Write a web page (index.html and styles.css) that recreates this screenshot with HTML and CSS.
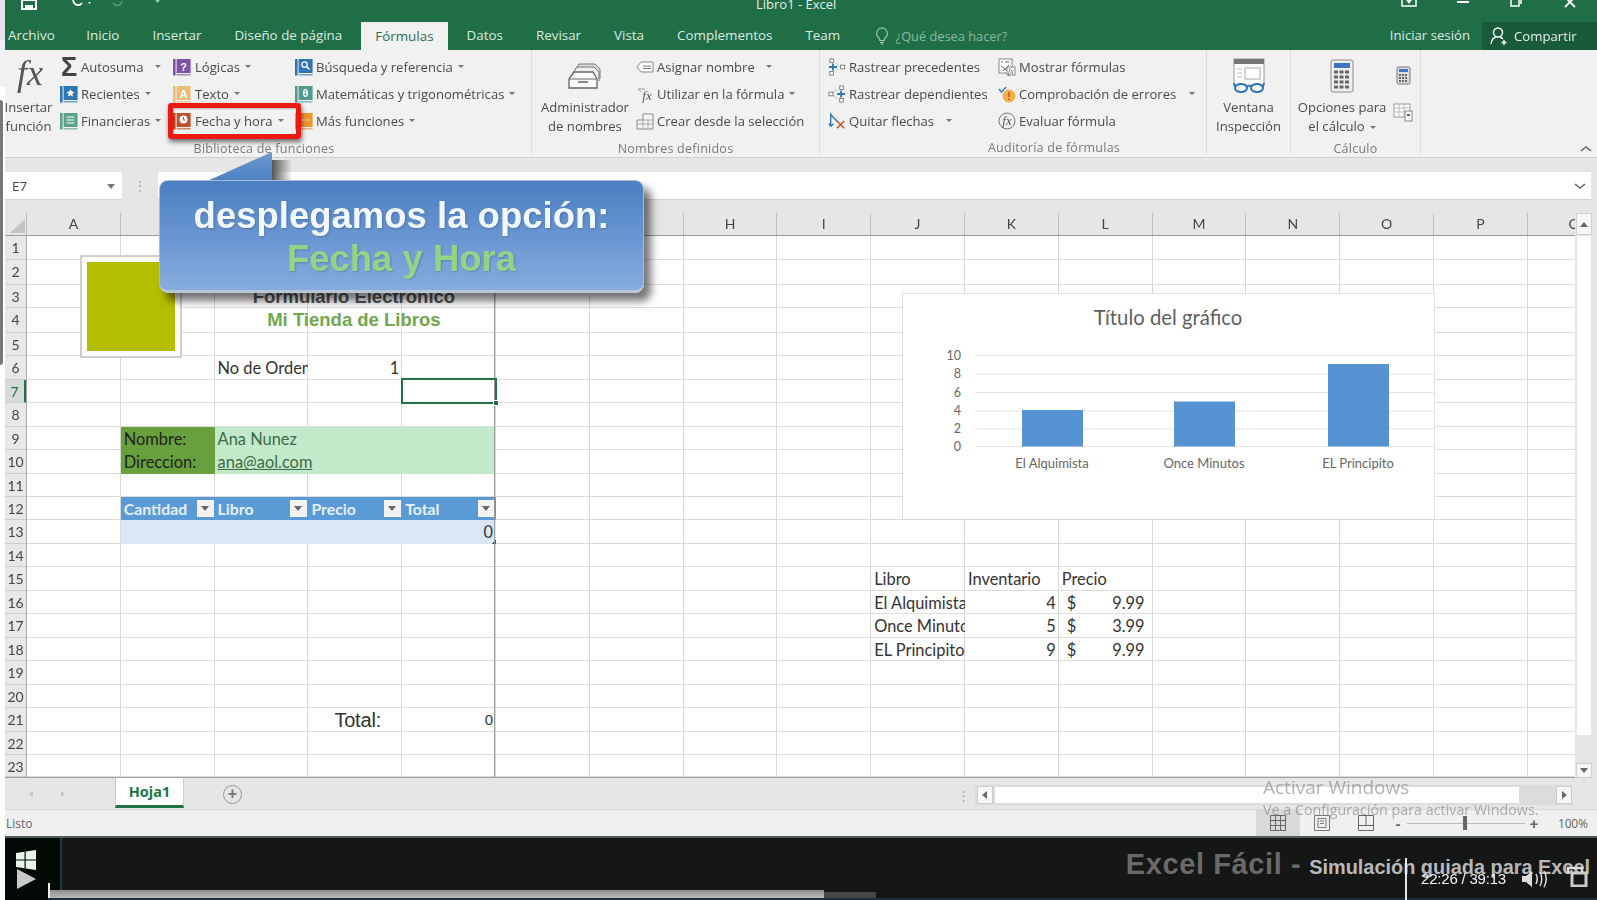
FILE: index.html
```html
<!DOCTYPE html>
<html lang="es">
<head>
<meta charset="utf-8">
<title>Libro1 - Excel</title>
<link rel="stylesheet" href="styles.css">
</head>
<body>
<svg class="sprite" aria-hidden="true">
  <symbol id="book" viewBox="0 0 18 18">
    <rect x="0" y="1" width="2.6" height="16.5" fill="currentColor"/>
    <rect x="3.6" y="1" width="14" height="14" fill="currentColor"/>
    <rect x="3.6" y="16" width="14" height="1.5" fill="currentColor" opacity=".65"/>
  </symbol>
</svg>
<div class="page">
  <div class="edge"><div class="edge-a"></div><div class="edge-b"></div><div class="edge-c"></div><div class="edge-d"></div></div>
  <div class="main">
    <header class="titlebar">
      <div class="qat">
        <svg class="save" width="16" height="10" viewBox="0 0 16 10"><path d="M1 0h14v9H1z" fill="none" stroke="#fff" stroke-width="2"/><rect x="4" y="5" width="8" height="4" fill="#fff"/></svg>
        <svg class="undo" width="22" height="10" viewBox="0 0 22 10"><path d="M2 0c1 5 6 7 9 3" fill="none" stroke="#fff" stroke-width="1.6"/><path d="M17 2l3 0-1.500 2z" fill="#fff"/></svg>
        <svg class="redo" width="50" height="10" viewBox="0 0 50 10"><path d="M2 3c4 4 8 3 9-2" fill="none" stroke="#5d9a7b" stroke-width="1.4"/><path d="M44 0l5 0-2.500 3z" fill="#9cc4ae"/></svg>
      </div>
      <div class="doc-title">Libro1 - Excel</div>
      <div class="winbtns">
        <svg class="wb-ribbon" width="16" height="8" viewBox="0 0 16 8"><path d="M1 0v6h14V0" fill="none" stroke="#fff" stroke-width="1.500"/><path d="M5 0h6L8 4z" fill="#fff"/></svg>
        <svg class="wb-min" width="12" height="6" viewBox="0 0 12 6"><rect y="1" width="12" height="2" fill="#fff"/></svg>
        <svg class="wb-max" width="12" height="8" viewBox="0 0 12 8"><path d="M1 0v6h8V0M4 0v-1M10 3h1V0" fill="none" stroke="#fff" stroke-width="1.500"/></svg>
        <svg class="wb-close" width="12" height="8" viewBox="0 0 12 8"><path d="M1-3l10 10M11-3L1 7" stroke="#fff" stroke-width="1.800"/></svg>
      </div>
    </header>

    <nav class="tabs">
      <span class="tab tab-file">Archivo</span>
      <span class="tab">Inicio</span>
      <span class="tab">Insertar</span>
      <span class="tab">Diseño de página</span>
      <span class="tab tab-on">Fórmulas</span>
      <span class="tab">Datos</span>
      <span class="tab">Revisar</span>
      <span class="tab">Vista</span>
      <span class="tab">Complementos</span>
      <span class="tab">Team</span>
      <span class="tell">
        <svg width="14" height="18" viewBox="0 0 14 18"><path d="M7 1a5.500 5.500 0 0 0-3 10c.6.500.8 1.500.8 2.500h4.400c0-1 .2-2 .8-2.500A5.500 5.500 0 0 0 7 1zM5 15.500h4M5.800 17h2.400" fill="none" stroke="#a8c9b6" stroke-width="1.100"/></svg>
        ¿Qué desea hacer?
      </span>
      <span class="signin">Iniciar sesión</span>
      <span class="share">
        <svg width="18" height="20" viewBox="0 0 18 20"><circle cx="8" cy="6.500" r="4.500" fill="none" stroke="#fff" stroke-width="1.400"/><path d="M1 18c.5-4 3-6.500 5-7M10 11c1 .3 2 1 3 2M14 14v5M11.500 16.500h5" fill="none" stroke="#fff" stroke-width="1.400"/></svg>
        Compartir
      </span>
    </nav>

    <section class="ribbon">
      <div class="group g-lib">
        <div class="group-body">
          <div class="big big-fx">
            <div class="big-icon"><span class="fx">fx</span></div>
            <div class="big-label">Insertar<br>función</div>
          </div>
          <div class="col col-a">
            <div class="cmd"><span class="ico sigma">Σ</span>Autosuma<i class="caret far-a"></i></div>
            <div class="cmd"><svg class="ico blue" viewBox="0 0 18 18"><use href="#book"/><path d="M10.500 4l1.200 2.600 2.800.3-2.100 1.900.6 2.800-2.500-1.400-2.500 1.400.6-2.800-2.100-1.900 2.800-.3z" fill="#fff"/></svg>Recientes<i class="caret"></i></div>
            <div class="cmd"><svg class="ico teal" viewBox="0 0 18 18"><use href="#book"/><path d="M6.500 5h8M6.500 8h8M6.500 11h8" stroke="#fff" stroke-width="1.200"/></svg>Financieras<i class="caret"></i></div>
          </div>
          <div class="col col-b">
            <div class="cmd"><svg class="ico purple" viewBox="0 0 18 18"><use href="#book"/><text x="10.500" y="12.500" class="ico-txt">?</text></svg>Lógicas<i class="caret"></i></div>
            <div class="cmd"><svg class="ico amber" viewBox="0 0 18 18"><use href="#book"/><text x="10.500" y="12.500" class="ico-txt">A</text></svg>Texto<i class="caret"></i></div>
            <div class="cmd"><svg class="ico rust" viewBox="0 0 18 18"><use href="#book"/><circle cx="10.500" cy="7.500" r="4" fill="#fff"/><path d="M10.500 5v3h2" stroke="#c0502a" fill="none"/></svg>Fecha y hora<i class="caret"></i></div>
          </div>
          <div class="col col-c">
            <div class="cmd"><svg class="ico blue" viewBox="0 0 18 18"><use href="#book"/><circle cx="9.500" cy="6.500" r="2.700" fill="none" stroke="#fff" stroke-width="1.300"/><path d="M11.500 8.500l3 3" stroke="#fff" stroke-width="1.500"/></svg>Búsqueda y referencia<i class="caret"></i></div>
            <div class="cmd"><svg class="ico sea" viewBox="0 0 18 18"><use href="#book"/><text x="10.500" y="12" class="ico-txt">θ</text></svg>Matemáticas y trigonométricas<i class="caret"></i></div>
            <div class="cmd"><svg class="ico orange" viewBox="0 0 18 18"><use href="#book"/><path d="M7 8h1.500M10 8h1.500M13 8h1.500" stroke="#fff" stroke-width="1.200"/></svg>Más funciones<i class="caret"></i></div>
          </div>
        </div>
        <div class="group-label label-lib">Biblioteca de funciones</div>
      </div>

      <div class="group g-names">
        <div class="group-body">
          <div class="big big-admin">
            <div class="big-icon">
              <svg width="36" height="30" viewBox="0 0 36 30"><path d="M8 9l4-6h16l5 5v10" fill="#ddd" stroke="#777"/><path d="M6 12l4-6h17l5 5v9" fill="#eee" stroke="#777"/><path d="M2 18l5-7h19l4 7v9H2z" fill="#fafafa" stroke="#666" stroke-width="1.300"/><path d="M2 18h28" stroke="#666"/><rect x="11" y="20" width="10" height="2" fill="#888"/></svg>
            </div>
            <div class="big-label">Administrador<br>de nombres</div>
          </div>
          <div class="col col-d">
            <div class="cmd"><svg class="ico" viewBox="0 0 18 18"><path d="M5 4h12v10H5L1 9z" fill="#fff" stroke="#888"/><path d="M7 8h8M7 10.500h8" stroke="#777"/></svg>Asignar nombre<i class="caret far-b"></i></div>
            <div class="cmd"><svg class="ico" viewBox="0 0 18 18"><path d="M2 4h7M2 4l3 3" stroke="#999" fill="none"/><text x="11" y="15" class="ico-fx">fx</text></svg>Utilizar en la fórmula<i class="caret"></i></div>
            <div class="cmd"><svg class="ico" viewBox="0 0 18 18"><path d="M7 2h10v15H1V8h6z" fill="#f5f5f5" stroke="#888"/><path d="M1 12h16M7 8v9M12 8v9M7 8h10" stroke="#aaa"/></svg>Crear desde la selección</div>
          </div>
        </div>
        <div class="group-label">Nombres definidos</div>
      </div>

      <div class="group g-audit">
        <div class="group-body">
          <div class="col col-e">
            <div class="cmd"><svg class="ico" viewBox="0 0 20 20"><rect x="2" y="1" width="4" height="4" fill="#fff" stroke="#777"/><rect x="2" y="15" width="4" height="4" fill="#fff" stroke="#777"/><rect x="14" y="8" width="4.500" height="4" fill="#fff" stroke="#777"/><path d="M1 10h9M5.500 6v8" stroke="#2e75b6" stroke-width="2"/><path d="M9 6l3 3M9 14l3-3" stroke="#888" stroke-dasharray="1 1"/></svg>Rastrear precedentes</div>
            <div class="cmd"><svg class="ico" viewBox="0 0 20 20"><rect x="1" y="8" width="4.500" height="4" fill="#fff" stroke="#777"/><rect x="13" y="1" width="4" height="4" fill="#fff" stroke="#777"/><rect x="13" y="15" width="4" height="4" fill="#fff" stroke="#777"/><path d="M10 10h9M14.500 6v8" stroke="#2e75b6" stroke-width="2"/><path d="M6 8l4-3M6 12l4 3" stroke="#888" stroke-dasharray="1 1"/></svg>Rastrear dependientes</div>
            <div class="cmd"><svg class="ico" viewBox="0 0 20 20"><path d="M3 1v15M3 16l-2-3M3 16l3-3M3 3l8 8" stroke="#2e75b6" stroke-width="1.500" fill="none"/><path d="M10 10l8 8M18 10l-8 8" stroke="#d9502e" stroke-width="1.800"/></svg>Quitar flechas<i class="caret far-c"></i></div>
          </div>
          <div class="col col-f">
            <div class="cmd"><svg class="ico" viewBox="0 0 18 18"><rect x="1" y="1" width="13" height="14" fill="#fff" stroke="#888"/><path d="M3 4h2M7 4h4M3 8l8 6M11 7l-6 6" stroke="#666"/><rect x="9" y="9" width="8" height="8" fill="#fff" stroke="#888"/><text x="13" y="16" class="ico-mini">fx</text></svg>Mostrar fórmulas</div>
            <div class="cmd"><svg class="ico" viewBox="0 0 18 18"><circle cx="11" cy="11" r="6.500" fill="#f3b04a"/><path d="M11 7v5M11 13.500v1.500" stroke="#d9502e" stroke-width="1.700"/><path d="M1 4l2.500 3L8 2" fill="none" stroke="#3f7fbe" stroke-width="1.500"/></svg>Comprobación de errores<i class="caret far-d"></i></div>
            <div class="cmd"><svg class="ico" viewBox="0 0 18 18"><circle cx="9" cy="9" r="8" fill="none" stroke="#777"/><text x="9" y="13" class="ico-fx">fx</text></svg>Evaluar fórmula</div>
          </div>
        </div>
        <div class="group-label label-audit">Auditoría de fórmulas</div>
      </div>

      <div class="group g-watch">
        <div class="group-body">
          <div class="big big-watch">
            <div class="big-icon">
              <svg width="34" height="36" viewBox="0 0 34 36"><rect x="2" y="1" width="30" height="26" fill="#fbfbfb" stroke="#999"/><rect x="2" y="1" width="30" height="5" fill="#777"/><rect x="13" y="10" width="15" height="11" fill="#fff" stroke="#aaa"/><path d="M5 11h5M5 15h5M5 19h5" stroke="#bbb"/><ellipse cx="9" cy="30" rx="6" ry="4" fill="#fff" stroke="#2e75b6" stroke-width="2"/><ellipse cx="25" cy="30" rx="6" ry="4" fill="#fff" stroke="#2e75b6" stroke-width="2"/><path d="M15 29c1-1.500 3-1.500 4 0M3 29l-1-4M31 29l1-4" stroke="#2e75b6" stroke-width="1.800" fill="none"/></svg>
            </div>
            <div class="big-label">Ventana<br>Inspección</div>
          </div>
        </div>
        <div class="group-label">&nbsp;</div>
      </div>

      <div class="group g-calc">
        <div class="group-body">
          <div class="big big-calc">
            <div class="big-icon">
              <svg width="24" height="34" viewBox="0 0 24 34"><rect x="1" y="1" width="22" height="32" rx="2" fill="#eee" stroke="#888"/><rect x="4" y="4" width="16" height="5" fill="#3f73c4"/><path d="M4 13h16M4 18h16M4 23h16M4 28h16" stroke="#666" stroke-width="3" stroke-dasharray="4 1.500"/></svg>
            </div>
            <div class="big-label">Opciones para<br>el cálculo<i class="caret"></i></div>
          </div>
          <div class="calc-side">
            <svg width="15" height="19" viewBox="0 0 15 19"><rect x="1" y="1" width="13" height="17" rx="1.500" fill="#ddd" stroke="#777"/><rect x="3" y="3" width="9" height="3" fill="#3f73c4"/><path d="M3 9h9M3 12h9M3 15h9" stroke="#666" stroke-width="2" stroke-dasharray="2 1"/></svg>
            <svg class="calc-sheet" width="20" height="19" viewBox="0 0 20 19"><rect x="1" y="1" width="16" height="13" fill="#fff" stroke="#999"/><path d="M1 5h16M1 9h16M6 1v13M11 1v13" stroke="#bbb"/><rect x="12" y="8" width="7" height="10" fill="#fff" stroke="#888"/><rect x="14" y="11" width="3" height="2" fill="#666"/></svg>
          </div>
        </div>
        <div class="group-label">Cálculo</div>
      </div>
      <svg class="collapse" width="12" height="8" viewBox="0 0 12 8"><path d="M1 6l5-4 5 4" fill="none" stroke="#666" stroke-width="1.600"/></svg>
    </section>

    <div class="formula">
      <div class="namebox">E7<i class="caret caret-box"></i></div>
      <div class="fdots">⋮</div>
      <div class="finput"><svg width="12" height="8" viewBox="0 0 12 8"><path d="M1 2l5 4 5-4" fill="none" stroke="#666" stroke-width="1.600"/></svg></div>
    </div>

    <div class="workbook">
      <div class="sheetarea">
        <div class="colheads">
          <div class="corner"><svg width="15" height="14" viewBox="0 0 15 14"><path d="M15 0v14H0z" fill="#c4c4c4"/></svg></div>
          <div class="colh">A</div><div class="colh">B</div><div class="colh">C</div><div class="colh">D</div><div class="colh">E</div><div class="colh">F</div><div class="colh">G</div><div class="colh">H</div><div class="colh">I</div><div class="colh">J</div><div class="colh">K</div><div class="colh">L</div><div class="colh">M</div><div class="colh">N</div><div class="colh">O</div><div class="colh">P</div><div class="colh">Q</div>
        </div>
        <div class="sheetbody">
          <div class="rowheads">
            <div>1</div><div>2</div><div>3</div><div>4</div><div>5</div><div>6</div><div class="row-on">7</div><div>8</div><div>9</div><div>10</div><div>11</div><div>12</div><div>13</div><div>14</div><div>15</div><div>16</div><div>17</div><div>18</div><div>19</div><div>20</div><div>21</div><div>22</div><div>23</div>
          </div>
          <div class="cells">
            <div class="rowlines"><i></i><i></i><i></i><i></i><i></i><i></i><i></i><i></i><i></i><i></i><i></i><i></i><i></i><i></i><i></i><i></i><i></i><i></i><i></i><i></i><i></i><i></i><i></i></div>
            <div class="cell title-dark r3 span-be">Formulario Electronico</div>
            <div class="cell title-green r4 span-be">Mi Tienda de Libros</div>
            <div class="cell r6 cC">No de Orden</div>
            <div class="cell num r6 cD">1</div>
            <div class="selected r7 cE"><i class="handle"></i></div>
            <div class="cell fill-dark r9 cB">Nombre:</div>
            <div class="cell fill-dark r10 cB">Direccion:</div>
            <div class="cell fill-light r9 span-ce">Ana Nunez</div>
            <div class="cell fill-light r10 span-ce"><span class="link">ana@aol.com</span></div>
            <div class="cell th r12 cB">Cantidad<i class="filter"></i></div>
            <div class="cell th r12 cC">Libro<i class="filter"></i></div>
            <div class="cell th r12 cD">Precio<i class="filter"></i></div>
            <div class="cell th r12 cE">Total<i class="filter"></i></div>
            <div class="cell tbody num r13 span-bd"></div>
            <div class="cell tbody num r13 cE">0<i class="resize"></i></div>
            <div class="cell total r21 cD">Total:</div>
            <div class="cell num arial r21 cE">0</div>
            <div class="cell r15 cJ">Libro</div><div class="cell r15 cK">Inventario</div><div class="cell r15 cL">Precio</div>
            <div class="cell r16 cJ">El Alquimista</div><div class="cell num r16 cK">4</div><div class="cell money r16 cL"><span>$</span><span>9.99</span></div>
            <div class="cell r17 cJ">Once Minutos</div><div class="cell num r17 cK">5</div><div class="cell money r17 cL"><span>$</span><span>3.99</span></div>
            <div class="cell r18 cJ">EL Principito</div><div class="cell num r18 cK">9</div><div class="cell money r18 cL"><span>$</span><span>9.99</span></div>

            <div class="logo"><div class="logo-fill"></div></div>
            <div class="chart">
              <svg width="533" height="227" viewBox="0 1 533 227">
                <text x="265" y="32" class="ch-title">Título del gráfico</text>
                <g class="ch-grid"><path d="M72 62.500h459M72 81h459M72 99.500h459M72 118h459M72 136h459M72 153.500h459"/></g>
                <g class="ch-axis"><text x="58" y="67">10</text><text x="58" y="85">8</text><text x="58" y="104">6</text><text x="58" y="122">4</text><text x="58" y="140">2</text><text x="58" y="158">0</text></g>
                <rect x="119" y="117" width="61" height="36.500" class="ch-bar"/>
                <rect x="271" y="108.500" width="61" height="45" class="ch-bar"/>
                <rect x="425" y="71" width="61" height="82.500" class="ch-bar"/>
                <g class="ch-cat"><text x="149" y="175">El Alquimista</text><text x="301" y="175">Once Minutos</text><text x="455" y="175">EL Principito</text></g>
              </svg>
            </div>
          </div>
        </div>
      </div>
      <div class="vscroll">
        <div class="vbtn"><i class="tri-up"></i></div>
        <div class="vthumb"></div>
        <div class="vbtn vbtn-end"><i class="tri-down"></i></div>
      </div>
    </div>

    <div class="sheetbar">
      <div class="nav"><i class="nav-l"></i><i class="nav-r"></i></div>
      <div class="sheet-tab">Hoja1</div>
      <div class="add">+</div>
      <div class="hs">
        <span class="hs-dots">⋮</span>
        <div class="hs-btn"><i class="tri-left"></i></div>
        <div class="hs-thumb"></div>
        <div class="hs-btn"><i class="tri-right"></i></div>
      </div>
    </div>

    <footer class="status">
      <span class="ready">Listo</span>
      <div class="views">
        <div class="view view-on"><svg width="16" height="16" viewBox="0 0 16 16"><path d="M.5.500h15v15H.5zM.5 5.500h15M.5 10.500h15M5.500.500v15M10.500.500v15" fill="none" stroke="#666"/></svg></div>
        <div class="view"><svg width="16" height="16" viewBox="0 0 16 16"><path d="M.5.500h15v15H.5z" fill="none" stroke="#777"/><path d="M4 3.500h8v9H4zM6 6h4M6 8.500h4" fill="none" stroke="#777"/></svg></div>
        <div class="view"><svg width="16" height="16" viewBox="0 0 16 16"><path d="M.5.500h15v15H.5zM.5 10.500h15M8 .500v10" fill="none" stroke="#666"/></svg></div>
      </div>
      <div class="zoom">
        <b class="z-sign">-</b>
        <div class="slider"><i class="knob"></i></div>
        <b class="z-sign">+</b>
        <span class="pct">100%</span>
      </div>
    </footer>

    <div class="video">
      <div class="player-left">
        <svg class="win" width="20" height="20" viewBox="0 0 20 20"><path d="M0 3l8.500-1.300V9.500H0zM9.700 1.500L20 0v9.500H9.700zM0 10.500h8.500v7.800L0 17zM9.700 10.500H20V20L9.700 18.500z" fill="#e8f3ea"/></svg>
        <svg class="play" width="19" height="20" viewBox="0 0 19 20"><path d="M0 0l19 10L0 20z" fill="#c9c9cc"/></svg>
      </div>
      <div class="brand"><span class="brand-a">Excel Fácil -</span><span class="brand-b">Simulación guiada para Excel</span></div>
      <div class="progress"><i class="tick"></i><div class="played"></div><div class="buffered"></div></div>
      <div class="cursor-line"></div>
      <div class="time">22:26 / 39:13</div>
      <svg class="vol" width="27" height="18" viewBox="0 0 27 18"><path d="M0 6h4l6-5v16l-6-5H0z" fill="#ddd"/><path d="M14 4c1.500 3 1.500 7 0 10M18 2c2.300 4 2.300 10 0 14M22 1c2.800 5 2.800 11 0 16" fill="none" stroke="#ddd" stroke-width="1.500"/></svg>
      <svg class="full" width="23" height="22" viewBox="0 0 23 22"><path d="M3 9V3h14v6" fill="none" stroke="#ddd" stroke-width="2.500"/><path d="M7 8h14v13H7z" fill="none" stroke="#ccc" stroke-width="3"/></svg>
    </div>
  </div>

  <div class="redbox"></div>
  <div class="tip-shadow"></div>
  <div class="tip-arrow"></div>
  <div class="callout">
    <div class="callout-a">desplegamos la opción:</div>
    <div class="callout-b">Fecha y Hora</div>
  </div>
  <div class="activate">
    <div class="act-a">Activar Windows</div>
    <div class="act-b">Ve a Configuración para activar Windows.</div>
  </div>
</div>
</body>
</html>
```

FILE: styles.css
```css
* { box-sizing: border-box; }
:root { --rows: 24px 24.6px 23.55px 24.55px repeat(6, 23.55px) 22.55px repeat(10, 23.55px) 22.55px 22.9px; }
html, body { margin: 0; padding: 0; background: #fff; }
i { display: block; font-style: normal; }
.sprite { position: absolute; width: 0; height: 0; }

.page {
  position: relative; width: 1597px; height: 900px; overflow: hidden; display: flex;
  font-family: "Open Sans", "Liberation Sans", sans-serif; color: #444;
  filter: blur(.5px);
}
.edge { width: 5px; display: flex; flex-direction: column; background: #fff; }
.edge-a { height: 40px; background: #e6e0f0; }
.edge-b { height: 47px; background: #f3f0f8; }
.edge-c { height: 13px; background: #fff; }
.edge-d { height: 265px; background: #fff; border-right: 3px solid #777; border-top-right-radius: 3px; border-bottom-right-radius: 3px; width: 3px; }

.main { width: 1592px; display: flex; flex-direction: column; }

/* title */
.titlebar { height: 22px; background: #1f6e46; display: flex; color: #e4efe8; overflow: hidden; }
.qat { width: 751px; display: flex; align-items: flex-start; padding-left: 16px; }
.undo { margin-left: 34px; }
.redo { margin-left: 18px; }
.doc-title { font-size: 13px; line-height: 9px; white-space: nowrap; }
.winbtns { margin-left: auto; display: flex; align-items: flex-start; padding-right: 21px; }
.wb-min { margin-left: 39.5px; }
.wb-max { margin-left: 41.5px; }
.wb-close { margin-left: 42px; }

/* tabs */
.tabs { height: 28px; background: #1f6e46; display: flex; align-items: stretch; font-size: 13.4px; color: #dcebe2; }
.tab { padding: 0 16.5px; line-height: 27px; white-space: nowrap; }
.tab-file { padding-left: 3px; padding-right: 15px; }
.tab-on { background: #f1f1f1; color: #2e6e4e; padding: 0 14.5px; margin: 0 2px; border-top: 1px solid #e6e6e6; }
.tell { display: flex; align-items: center; gap: 7px; margin-left: 18px; color: #8fb8a2; font-size: 12.8px; }
.signin { margin-left: auto; line-height: 27px; padding-right: 12px; font-size: 13.2px; }
.share { width: 115px; background: #195a3a; display: flex; align-items: center; gap: 6px; padding-left: 8px; color: #e6f0ea; font-size: 13.2px; }

/* ribbon */
.ribbon { position: relative; height: 108px; background: #f1f1f1; display: flex; border-bottom: 1px solid #d0d0d0; font-size: 13.1px; color: #4a4a4a; }
.group { display: flex; flex-direction: column; border-right: 1px solid #dcdcdc; margin-bottom: 3px; }
.group-body { flex: 1; display: flex; padding-top: 3px; }
.group-label { height: 20px; line-height: 27px; text-align: center; font-size: 12.5px; color: #7a7a7a; letter-spacing: .25px; white-space: nowrap; }
.label-lib { padding-right: 8px; }
.label-audit { padding-left: 82px; }
.g-lib { width: 527px; }
.g-names { width: 288px; }
.g-audit { width: 387px; }
.g-watch { width: 84px; }
.g-calc { width: 130px; }
.col { display: flex; flex-direction: column; }
.cmd { height: 27px; display: flex; align-items: center; white-space: nowrap; }
.ico { width: 18px; height: 18px; flex: none; margin-right: 3px; }
.sigma { font: bold 27px/18px "Liberation Sans", sans-serif; color: #444; text-align: center; }
.blue { color: #2e75b6; } .teal { color: #5aa389; } .purple { color: #7d52a8; }
.amber { color: #ecbe78; } .rust { color: #c0502a; } .sea { color: #4f9a90; } .orange { color: #f0962b; }
.ico-txt { font: bold 11px "Liberation Sans", sans-serif; fill: #fff; text-anchor: middle; }
.ico-fx { font: italic 13px "Liberation Serif", serif; fill: #555; text-anchor: middle; }
.ico-mini { font: italic 8px "Liberation Serif", serif; fill: #555; text-anchor: middle; }
.caret { width: 0; height: 0; border: 3px solid transparent; border-top: 3.500px solid #777; border-bottom: 0; margin-left: 5px; flex: none; }
.far-a { margin-left: 11px; }
.far-b { margin-left: 11px; }
.far-c { margin-left: 12px; }
.far-d { margin-left: 13px; }

.big { display: flex; flex-direction: column; align-items: center; text-align: center; }
.big-icon { height: 45px; display: flex; align-items: center; justify-content: center; }
.big-label { line-height: 18.5px; white-space: nowrap; }
.big-label .caret { display: inline-block; vertical-align: middle; }
.big-fx { width: 47px; }
.fx { font: italic 36px/40px "Liberation Serif", serif; color: #555; margin: -6px 0 0 3px; }
.col-a { width: 112px; margin-left: 8px; }
.col-b { width: 123px; }
.col-b .ico { margin-right: 4px; margin-left: 1px; }
.col-c { flex: 1; }
.big-admin { width: 96px; margin-left: 5px; }
.col-d { margin-left: 3px; }
.col-e { width: 170px; margin-left: 8px; }
.big-watch { width: 84px; }
.big-calc { width: 102px; }
.calc-side { display: flex; flex-direction: column; align-items: center; padding-top: 13px; }
.calc-sheet { margin-top: 18px; }
.collapse { position: absolute; right: 5px; top: 95px; }

/* formula */
.formula { height: 55px; background: #e6e6e6; display: flex; align-items: flex-start; padding-top: 14px; }
.namebox { width: 117px; height: 28px; background: #fff; display: flex; align-items: center; justify-content: space-between; padding: 1px 7px 0 7px; font-size: 13.5px; border-bottom: 1px solid #d8d8d8; }
.caret-box { border-width: 4px; border-top-width: 5px; border-bottom: 0; }
.fdots { width: 36px; text-align: center; line-height: 28px; color: #aaa; font-size: 14px; }
.finput { width: 1433px; height: 28px; background: #fff; border-bottom: 1px solid #d0d0d0; display: flex; align-items: center; justify-content: flex-end; padding-right: 5px; }

/* sheet */
.workbook { display: flex; height: 565px; }
.sheetarea { width: 1570px; display: flex; flex-direction: column; overflow: hidden; }
.colheads { height: 23px; flex: none; display: flex; background: #e6e6e6; border-bottom: 1px solid #999; font: 14px/21px "Lato", sans-serif; color: #444; }
.corner { width: 22px; flex: none; padding: 6px 0 0 5px; border-right: 1px solid #bbb; display: flex; }
.colh { width: 93.8px; flex: none; text-align: center; border-right: 1px solid #bfbfbf; }
.sheetbody { flex: 1; display: flex; border-bottom: 1.500px solid #a0a0a0; }
.rowheads { width: 22px; flex: none; display: grid; grid-template-rows: var(--rows); background: #e8e8e8; border-right: 1px solid #aaa; font: 14px/23px "Lato", sans-serif; color: #444; text-align: center; }
.rowheads div { border-bottom: 1px solid #cdcdcd; }
.rowheads .row-on { background: #d9d9d9; border-right: 2px solid #217346; color: #217346; }
.cells {
  position: relative; z-index: 0; flex: none; display: grid;
  grid-template-columns: repeat(17, 93.8px); grid-template-rows: var(--rows);
  background-color: #fff;
  background-image: repeating-linear-gradient(to right, transparent 0 92.8px, #d8d8d8 92.8px 93.8px);
  font: 16.4px/23px "Lato", "Open Sans", sans-serif; color: #333;
}
.rowlines { position: absolute; z-index: -1; inset: 0; display: grid; grid-template-rows: var(--rows); }
.rowlines i { border-bottom: 1px solid #dcdcdc; }
.cells::after { content: ""; position: absolute; left: 466.8px; top: 0; bottom: 0; width: 1.500px; background: #999; }
.cell { padding: 0 3px; white-space: nowrap; overflow: hidden; }
.cB { grid-column: 2; } .cC { grid-column: 3; } .cD { grid-column: 4; } .cE { grid-column: 5; }
.cJ { grid-column: 10; } .cK { grid-column: 11; } .cL { grid-column: 12; }
.r3 { grid-row: 3; } .r4 { grid-row: 4; } .r6 { grid-row: 6; } .r7 { grid-row: 7; } .r9 { grid-row: 9; } .r10 { grid-row: 10; }
.r12 { grid-row: 12; } .r13 { grid-row: 13; } .r15 { grid-row: 15; } .r16 { grid-row: 16; } .r17 { grid-row: 17; } .r18 { grid-row: 18; } .r21 { grid-row: 21; }
.span-be { grid-column: 2 / 6; } .span-ce { grid-column: 3 / 6; } .span-bd { grid-column: 2 / 5; }
.num { text-align: right; }
.title-dark, .title-green { font: bold 18.5px/24px "Liberation Sans", sans-serif; text-align: center; padding-left: 94px; }
.title-dark { color: #555; }
.title-green { color: #6fa84f; }
.selected { position: relative; z-index: 2; border: 2px solid #217346; margin: -2px -1px -1px -1px; }
.handle { position: absolute; right: -4px; bottom: -4px; width: 6px; height: 6px; background: #217346; border: 1px solid #fff; }
.fill-dark { background: #67a03c; color: #222; }
.fill-light { background: #c3e9cb; color: #3c6b45; }
.link { text-decoration: underline; }
.th { background: #5b9bd5; color: #e6f0fa; font-weight: bold; font-size: 15.8px; display: flex; justify-content: space-between; align-items: center; padding-right: 1px; }
.filter { width: 17px; height: 17px; background: #f3f3f3; position: relative; flex: none; }
.filter::after { content: ""; position: absolute; left: 4px; top: 6px; border: 4.500px solid transparent; border-top: 5px solid #666; border-bottom: 0; }
.tbody { background: #dae7f6; position: relative; }
.resize { position: absolute; right: 0; bottom: 0; width: 4px; height: 4px; background: linear-gradient(135deg, transparent 50%, #2e5fb0 50%); }
.total { font: 20px/24px "Liberation Sans", sans-serif; padding-left: 26px; color: #333; overflow: visible; letter-spacing: -.2px; }
.arial { font: 15px/23px "Liberation Sans", sans-serif; }
.money { display: flex; justify-content: space-between; padding: 0 8px; }
.logo { position: absolute; left: 53px; top: 19px; width: 102px; height: 103px; background: #fdfdfd; border: 2px solid #cfcfcf; padding: 5px; }
.logo-fill { width: 100%; height: 100%; background: #b5bd00; }
.chart { position: absolute; left: 875px; top: 57px; width: 533px; height: 227px; background: #fff; border: 1px solid #e2e2e2; border-bottom-color: #d4d4d4; }
.ch-title { font: 20.3px "Lato", sans-serif; fill: #5f5f5f; text-anchor: middle; }
.ch-grid path { stroke: #e4e4e4; stroke-width: 1; fill: none; }
.ch-axis text { font: 12.5px "Lato", sans-serif; fill: #666; text-anchor: end; }
.ch-cat text { font: 13px "Lato", sans-serif; fill: #666; text-anchor: middle; }
.ch-bar { fill: #5593d3; }

.vscroll { width: 22px; flex: none; background: #e6e6e6; display: flex; flex-direction: column; align-items: center; padding-right: 4px; }
.vbtn { width: 16px; height: 22px; background: #f7f7f7; border: 1px solid #d0d0d0; display: flex; align-items: center; justify-content: center; flex: none; }
.vbtn-end { height: 15px; margin-top: 28px; }
.vthumb { width: 14px; height: 499px; background: #fff; margin-top: 1px; }
.tri-up { border: 4px solid transparent; border-bottom: 5px solid #666; border-top: 0; }
.tri-down { border: 4px solid transparent; border-top: 5px solid #666; border-bottom: 0; }
.tri-left { border: 4px solid transparent; border-right: 5px solid #666; border-left: 0; }
.tri-right { border: 4px solid transparent; border-left: 5px solid #666; border-right: 0; }

/* tabs below sheet */
.sheetbar { height: 32px; background: #e6e6e6; display: flex; border-bottom: 1px solid #d8d8d8; }
.nav { width: 110px; display: flex; align-items: center; padding: 0 0 0 24px; gap: 28px; }
.nav-l { border: 3px solid transparent; border-right: 4px solid #c4c4c4; border-left: 0; }
.nav-r { border: 3px solid transparent; border-left: 4px solid #c4c4c4; border-right: 0; }
.sheet-tab { width: 69px; height: 30px; background: #fff; border-bottom: 3px solid #217346; color: #217346; font: bold 14.5px/28px "Open Sans", sans-serif; text-align: center; border-left: 1px solid #ccc; border-right: 1px solid #ccc; }
.add { width: 19px; height: 19px; margin: 7px 0 0 39px; border: 1.500px solid #999; border-radius: 50%; font: bold 16px/15px "Liberation Sans", sans-serif; text-align: center; color: #777; }
.hs { width: 620px; margin-left: auto; margin-right: 25px; display: flex; align-items: center; gap: 2px; background: #dcdcdc; height: 20px; margin-top: 7px; }
.hs-dots { width: 23px; background: #e6e6e6; color: #aaa; text-align: center; font-size: 13px; line-height: 20px; }
.hs-btn { width: 16px; height: 18px; background: #f7f7f7; border: 1px solid #ccc; display: flex; align-items: center; justify-content: center; flex: none; }
.hs-thumb { width: 525px; height: 16px; background: #fff; margin-right: 35px; }

/* status */
.status { height: 26px; background: #f0f0f0; display: flex; align-items: center; font-size: 12px; color: #666; }
.ready { padding-left: 1px; }
.views { margin-left: auto; display: flex; height: 100%; }
.view { width: 44px; display: flex; align-items: center; justify-content: center; }
.view-on { background: #d9d9d9; }
.zoom { display: flex; align-items: center; width: 209px; padding-left: 3px; }
.z-sign { width: 14px; text-align: center; font: bold 15px "Liberation Sans", sans-serif; color: #666; }
.slider { width: 118px; height: 1px; background: #bbb; position: relative; margin: 0 2px; }
.knob { position: absolute; left: 56px; top: -7px; width: 4px; height: 14px; background: #666; }
.pct { margin-left: 17px; letter-spacing: -.2px; }

/* video bar */
.video { position: relative; height: 64px; background: #151616; border-top: 2px solid #4f5f58; display: flex; }
.player-left { width: 57px; flex: none; background: #030a06; border-right: 2px solid #1e3a4a; position: relative; }
.win { position: absolute; left: 11px; top: 12px; }
.play { position: absolute; left: 12px; top: 31px; }
.brand { margin-left: auto; display: flex; align-items: baseline; padding: 10px 7px 0 0; font-family: "Liberation Sans", sans-serif; font-weight: bold; white-space: nowrap; }
.brand-a { font-size: 29px; color: #6a6a6a; letter-spacing: .6px; }
.brand-b { font-size: 19.9px; color: #b9b9b9; margin-left: 8px; }
.progress { position: absolute; left: 43px; right: 0; bottom: 0; height: 10px; display: flex; align-items: flex-end; border-bottom: 2px solid #1b2f3d; }
.tick { position: absolute; left: 0; bottom: 0; width: 1.500px; height: 15px; background: #eee; }
.played { width: 776px; height: 8px; background: linear-gradient(#8e8e8e, #b8b8b8); }
.buffered { width: 52px; height: 6px; background: #474747; }
.cursor-line { position: absolute; left: 1400px; top: 20px; bottom: 0; width: 1.500px; background: #e8e8e8; }
.time { position: absolute; left: 1416px; top: 31px; font: 15px/20px "Liberation Sans", sans-serif; color: #f2f2f2; letter-spacing: -.2px; }
.vol { position: absolute; left: 1517px; top: 32px; }
.full { position: absolute; left: 1560px; top: 27px; }

/* overlays */
.redbox { position: absolute; left: 168px; top: 103px; width: 133px; height: 36px; border: 5px solid #ea1a12; border-radius: 3px; box-shadow: 1px 3px 5px rgba(0,0,0,.55), inset 1px 1px 2px rgba(0,0,0,.25); }
.tip-shadow { position: absolute; left: 272px; top: 160px; width: 20px; height: 20px; background: linear-gradient(to right, #555, rgba(120,120,120,0)); }
.tip-arrow { position: absolute; left: 205px; top: 152px; width: 67px; height: 30px; background: linear-gradient(#6f9ace, #4a80c2); clip-path: polygon(100% 0, 100% 100%, 0 100%); }
.callout {
  position: absolute; left: 159px; top: 180px; width: 485px; height: 113px; border-radius: 9px; padding-top: 13px;
  background: linear-gradient(#4a7fc2, #86acdf); border: 1px solid #a9bdd6; border-bottom: 3px solid #b7c6d9;
  box-shadow: 7px 8px 8px rgba(0,0,0,.55); text-align: center;
  font: bold 36.5px/43px "Liberation Sans", sans-serif; text-shadow: 1px 1px 2px rgba(0,0,40,.2);
}
.callout-a { color: #f2f8ff; }
.callout-b { color: #93d587; }
.activate { position: absolute; left: 1263px; top: 775px; color: rgba(115,115,115,.55); white-space: nowrap; }
.act-a { font-size: 19px; line-height: 24px; }
.act-b { font-size: 14.3px; line-height: 21px; }
```
